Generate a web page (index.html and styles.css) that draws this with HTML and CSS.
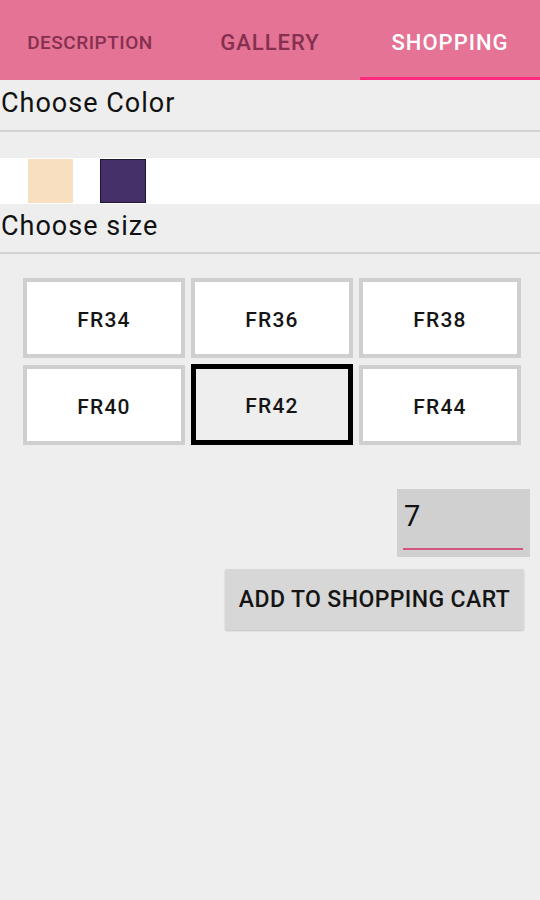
FILE: index.html
```html
<!DOCTYPE html>
<html>
<head>
<meta charset="utf-8">
<link rel="stylesheet" href="styles.css">
</head>
<body>
<header class="tabs">
  <div class="tab tab-desc">DESCRIPTION</div>
  <div class="tab tab-gallery">GALLERY</div>
  <div class="tab tab-active">SHOPPING</div>
</header>
<div class="label">Choose Color</div>
<div class="divider"></div>
<div class="swatches">
  <div class="swatch swatch-beige"></div>
  <div class="swatch swatch-purple"></div>
</div>
<div class="label label-size">Choose size</div>
<div class="divider"></div>
<div class="sizes">
  <div class="size">FR34</div>
  <div class="size">FR36</div>
  <div class="size">FR38</div>
  <div class="size">FR40</div>
  <div class="size size-selected">FR42</div>
  <div class="size">FR44</div>
</div>
<div class="qty-row">
  <div class="qty"><span class="qty-value">7</span><div class="qty-line"></div></div>
</div>
<div class="cart-row">
  <div class="cart-btn">ADD TO SHOPPING CART</div>
</div>
</body>
</html>
```

FILE: styles.css
```css
html, body {
  margin: 0;
  padding: 0;
}
body {
  width: 540px;
  height: 900px;
  background: #eeeeee;
  font-family: Roboto, "Noto Sans", sans-serif;
  color: #111;
  overflow: hidden;
}
.tabs {
  height: 80px;
  background: #e47395;
  display: grid;
  grid-template-columns: 180px 1fr 180px;
}
.tab {
  display: flex;
  align-items: center;
  justify-content: center;
  font-weight: 500;
  font-size: 22px;
  letter-spacing: 1px;
  color: #86304f;
  padding-top: 4px;
  box-sizing: border-box;
}
.tab-desc {
  font-size: 19px;
  letter-spacing: 0.5px;
}
.tab-active {
  color: #ffffff;
  box-shadow: inset 0 -3px 0 #ff2a7e;
}
.label {
  height: 50px;
  font-size: 27px;
  letter-spacing: 1px;
  line-height: 46px;
  padding-left: 1px;
  color: #111;
}
.label-size {
  height: 48px;
  line-height: 44px;
}
.divider {
  height: 2px;
  background: #d2d2d2;
}
.swatches {
  margin-top: 26px;
  height: 46px;
  background: #ffffff;
  display: flex;
  align-items: center;
  gap: 27px;
  padding-left: 28px;
}
.swatch {
  width: 45px;
  height: 44px;
  box-sizing: border-box;
}
.swatch-beige {
  background: #f7dfbf;
}
.swatch-purple {
  width: 46px;
  background: #46306a;
  border: 1px solid #1e1530;
}
.sizes {
  margin: 24px 18px 0 23px;
  display: grid;
  grid-template-columns: repeat(3, 162px);
  grid-auto-rows: 80px;
  column-gap: 6px;
  row-gap: 7px;
}
.size {
  background: #ffffff;
  border: 4px solid #cfcfcf;
  display: flex;
  align-items: center;
  justify-content: center;
  font-size: 21px;
  letter-spacing: 1.2px;
  font-weight: 500;
  color: #151515;
  padding-top: 3px;
  box-sizing: border-box;
}
.size-selected {
  background: #eeeeee;
  border: 5px solid #000000;
  margin-top: -1px;
}
.qty-row {
  display: flex;
  justify-content: flex-end;
  margin-top: 44px;
  padding-right: 10px;
}
.qty {
  width: 133px;
  height: 68px;
  background: #d0d0d0;
  position: relative;
  box-sizing: border-box;
  padding: 12px 0 0 7px;
}
.qty-value {
  font-size: 29px;
  line-height: 30px;
  color: #111;
}
.qty-line {
  position: absolute;
  left: 6px;
  right: 7px;
  top: 59px;
  height: 2px;
  background: #d3557f;
}
.cart-row {
  display: flex;
  justify-content: flex-end;
  margin-top: 12px;
  padding-right: 16px;
}
.cart-btn {
  width: 299px;
  height: 61px;
  background: #d7d7d7;
  border-radius: 2px;
  box-shadow: 0 1px 2px rgba(0,0,0,0.18);
  display: flex;
  align-items: center;
  justify-content: center;
  font-size: 23px;
  letter-spacing: 0.4px;
  font-weight: 500;
  color: #151515;
}
```
